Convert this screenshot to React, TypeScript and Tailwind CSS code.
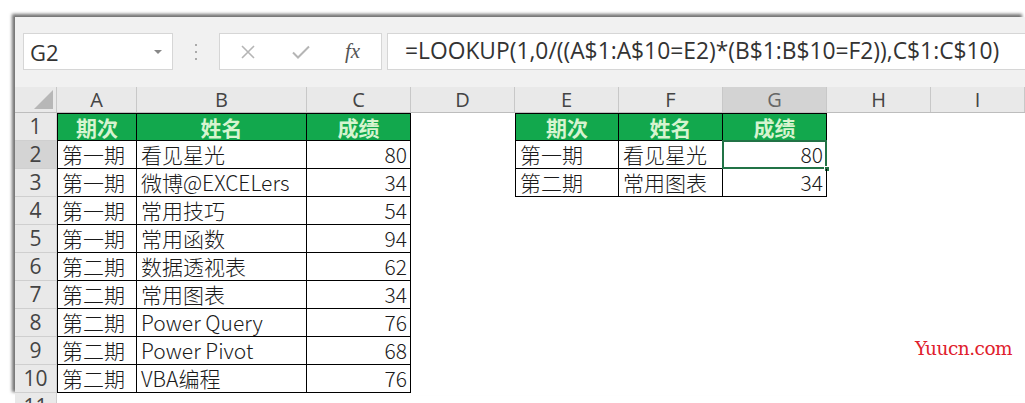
import React from "react";

const cols = [
  { key: "A", w: "w-[80px]" },
  { key: "B", w: "w-[170px]" },
  { key: "C", w: "w-[104px]" },
  { key: "D", w: "w-[104px]" },
  { key: "E", w: "w-[104px]" },
  { key: "F", w: "w-[104px]" },
  { key: "G", w: "w-[104px]" },
  { key: "H", w: "w-[104px]" },
  { key: "I", w: "flex-1" },
];

const left: [string, string, string][] = [
  ["第一期", "看见星光", "80"],
  ["第一期", "微博@EXCELers", "34"],
  ["第一期", "常用技巧", "54"],
  ["第一期", "常用函数", "94"],
  ["第二期", "数据透视表", "62"],
  ["第二期", "常用图表", "34"],
  ["第二期", "Power Query", "76"],
  ["第二期", "Power Pivot", "68"],
  ["第二期", "VBA编程", "76"],
];

const right: [string, string, string][] = [
  ["第一期", "看见星光", "80"],
  ["第二期", "常用图表", "34"],
];

const cellFont = "font-['Noto_Sans_CJK_SC',sans-serif]";

function HeadCell({ text, w, first }: { text: string; w: string; first?: boolean }) {
  return (
    <div
      className={`${w} h-full flex items-center justify-center bg-[#12a84d] border-r border-b border-t border-black ${first ? "border-l" : ""} text-[21px] font-bold text-[#d6f4cf] leading-none`}
    >
      {text}
    </div>
  );
}

function DataCell({
  text,
  w,
  first,
  num,
  selected,
}: {
  text: string;
  w: string;
  first?: boolean;
  num?: boolean;
  selected?: boolean;
}) {
  return (
    <div
      className={`${w} h-full relative flex items-center border-r border-b border-black ${first ? "border-l" : ""} ${num ? "justify-end pr-[3px]" : "pl-[4px]"} text-[21px] font-light text-[#1a1a1a] leading-none`}
    >
      {text}
      {selected && (
        <>
          <div className="absolute -left-[1px] -top-[1px] -right-[1px] -bottom-[1px] border-2 border-[#217346]" />
          <div className="absolute -right-[4px] -bottom-[4px] w-[6px] h-[6px] bg-[#217346] border border-white" />
        </>
      )}
    </div>
  );
}

function Blank({ w }: { w: string }) {
  return <div className={`${w} h-full`} />;
}

function RowHead({ n, active }: { n: number; active?: boolean }) {
  return (
    <div
      className={`w-[42px] h-full flex items-center justify-center border-r border-b border-[#cfcfcf] ${active ? "bg-[#d4d4d4]" : "bg-[#e9e9e9]"} text-[21px] text-[#444] font-['Open_Sans',sans-serif] leading-none`}
    >
      {n}
    </div>
  );
}

export default function App() {
  return (
    <div className="w-[1025px] h-[403px] bg-white overflow-hidden relative">
      <div className="ml-[15px] mt-[17px] h-[378px] bg-white shadow-[-3px_-3px_3px_rgba(0,0,0,0.55)] flex flex-col">
        {/* Formula bar */}
        <div className="h-[70px] shrink-0 bg-[#f1f1f1] flex items-start pt-[16px] pl-[8px] font-['Open_Sans',sans-serif]">
          <div className="w-[150px] h-[37px] bg-white border border-[#d6d6d6] flex items-center justify-between pl-[6px] pr-[10px]">
            <span className="text-[22px] text-[#333] leading-none">G2</span>
            <span className="w-0 h-0 border-l-[4px] border-r-[4px] border-t-[4px] border-l-transparent border-r-transparent border-t-[#888]" />
          </div>
          <div className="w-[46px] h-[37px] flex flex-col items-center justify-center gap-[5px]">
            <span className="w-[2px] h-[2px] bg-[#aaa]" />
            <span className="w-[2px] h-[2px] bg-[#aaa]" />
            <span className="w-[2px] h-[2px] bg-[#aaa]" />
          </div>
          <div className="w-[163px] h-[37px] bg-white border border-[#d6d6d6] flex items-center">
            <svg width="16" height="16" viewBox="0 0 16 16" className="ml-[20px]">
              <path d="M2 2L14 14M14 2L2 14" stroke="#b5b5b5" strokeWidth="1.6" fill="none" />
            </svg>
            <svg width="20" height="16" viewBox="0 0 20 16" className="ml-[35px]">
              <path d="M2 8.5L7 13.5L18 2.5" stroke="#b5b5b5" strokeWidth="2" fill="none" />
            </svg>
            <span className="ml-[34px] text-[21px] italic text-[#555] font-['Liberation_Serif',serif] leading-none">
              fx
            </span>
          </div>
          <div className="ml-[5px] flex-1 h-[37px] bg-white border border-[#d6d6d6] border-r-0 flex items-center pl-[17px]">
            <span className="text-[22.8px] text-[#333] leading-none">
              =LOOKUP(1,0/((A$1:A$10=E2)*(B$1:B$10=F2)),C$1:C$10)
            </span>
          </div>
        </div>

        {/* Column headers */}
        <div className="h-[26px] shrink-0 flex bg-[#e9e9e9] border-b border-[#bdbdbd] font-['Open_Sans',sans-serif]">
          <div className="w-[42px] h-full flex items-end justify-end pr-[3px] pb-[3px] border-r border-[#c8c8c8]">
            <span className="w-0 h-0 border-b-[19px] border-l-[19px] border-b-[#b7b7b7] border-l-transparent" />
          </div>
          {cols.map((c) => (
            <div
              key={c.key}
              className={`${c.w} h-full flex items-center justify-center border-r border-[#c8c8c8] text-[20px] text-[#444] leading-none ${c.key === "G" ? "bg-[#d3d3d3] text-[#666]" : ""}`}
            >
              {c.key}
            </div>
          ))}
        </div>

        {/* Grid */}
        <div className={`flex flex-col ${cellFont}`}>
          <div className="h-[28px] flex">
            <RowHead n={1} />
            <HeadCell text="期次" w="w-[80px]" first />
            <HeadCell text="姓名" w="w-[170px]" />
            <HeadCell text="成绩" w="w-[104px]" />
            <Blank w="w-[104px]" />
            <HeadCell text="期次" w="w-[104px]" first />
            <HeadCell text="姓名" w="w-[104px]" />
            <HeadCell text="成绩" w="w-[104px]" />
            <Blank w="flex-1" />
          </div>
          {left.map((r, i) => (
            <div key={i} className="h-[28px] flex">
              <RowHead n={i + 2} active={i === 0} />
              <DataCell text={r[0]} w="w-[80px]" first />
              <DataCell text={r[1]} w="w-[170px]" />
              <DataCell text={r[2]} w="w-[104px]" num />
              <Blank w="w-[104px]" />
              {right[i] ? (
                <>
                  <DataCell text={right[i][0]} w="w-[104px]" first />
                  <DataCell text={right[i][1]} w="w-[104px]" />
                  <DataCell text={right[i][2]} w="w-[104px]" num selected={i === 0} />
                </>
              ) : (
                <>
                  <Blank w="w-[104px]" />
                  <Blank w="w-[104px]" />
                  <Blank w="w-[104px]" />
                </>
              )}
              <Blank w="flex-1" />
            </div>
          ))}
          <div className="h-[28px] flex">
            <RowHead n={11} />
          </div>
        </div>
      </div>

      <div className="absolute left-[915px] top-[340px] text-[18.5px] text-[#e0202c] font-['DejaVu_Serif',serif] leading-none tracking-[-0.5px]">
        Yuucn.com
      </div>
    </div>
  );
}
